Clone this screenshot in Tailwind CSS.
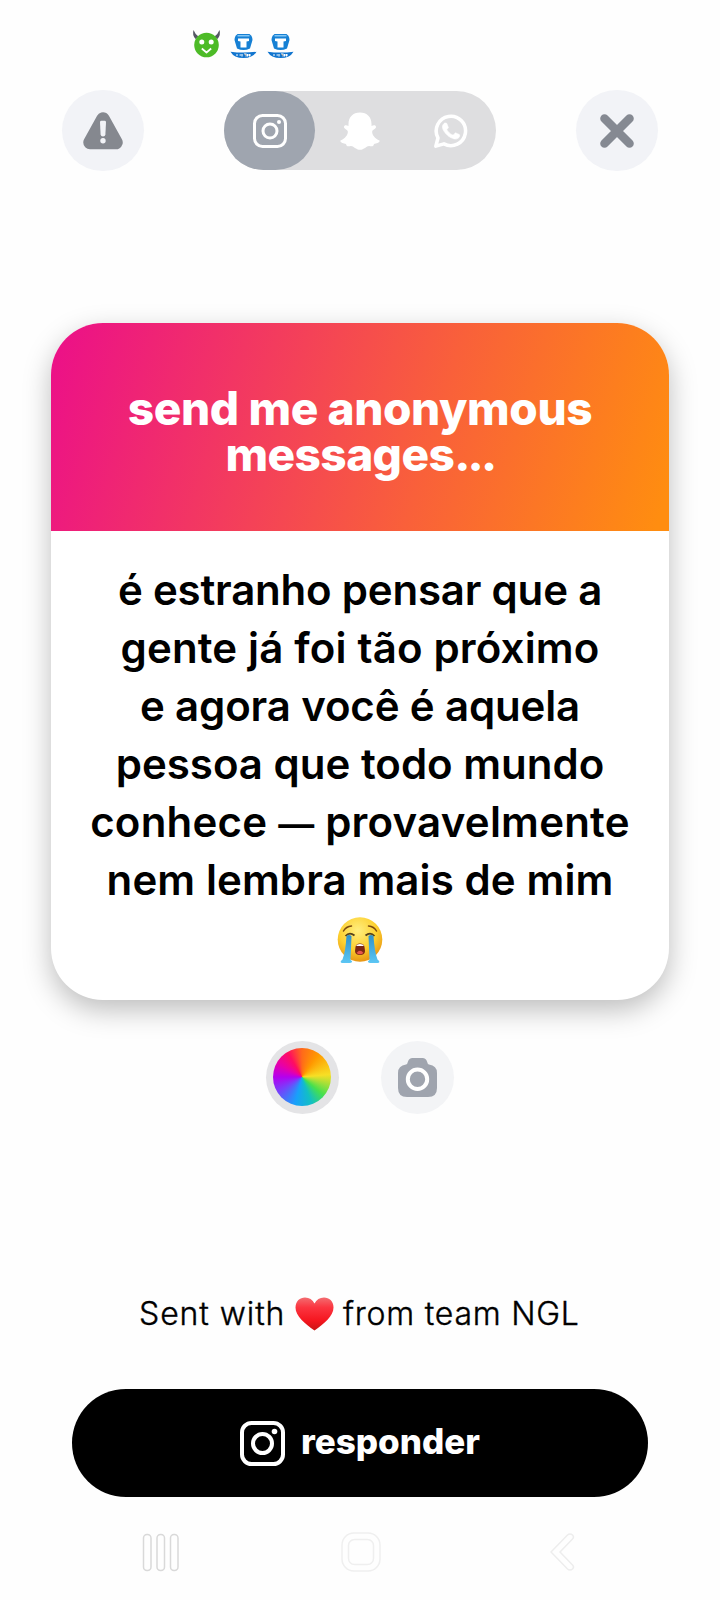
<!DOCTYPE html>
<html lang="pt"><head><meta charset="utf-8"><title>NGL</title>
<script src="https://cdn.jsdelivr.net/npm/@tailwindcss/browser@4"></script></head>
<body class="bg-[#fefefe]">
<main class="w-[720px] h-[1600px] overflow-hidden flex flex-col items-center font-['Inter','Liberation_Sans',sans-serif] text-black">
  <div class="w-full h-[90px] pt-[29px] pl-[192px] flex gap-[8px] shrink-0">
    <svg class="w-[29px] h-[30px]" viewBox="0 0 29 30"><path d="M1.500 1Q0 6 3.500 10L6.500 7.500Q3 5 1.500 1ZM27.500 1Q29 6 25.500 10L22.500 7.500Q26 5 27.500 1Z" fill="#555764"/><circle cx="14.500" cy="16" r="12.300" fill="#4dbb27"/><circle cx="9.800" cy="13" r="2.500" fill="#fff"/><circle cx="19.200" cy="13" r="2.500" fill="#fff"/><path d="M9.800 19.500L14.500 23.500L19.200 19.500" fill="none" stroke="#fff" stroke-width="1.700" stroke-linejoin="round"/></svg>
    <svg class="w-[29px] h-[30px]" viewBox="0 0 29 30"><defs><g id="app"><path d="M8.500 5H20.500Q23.500 7 23.500 11L21 19.500Q14.500 22.500 8 19.500L5.500 11Q5.500 7 8.500 5Z" fill="#1680d4"/><path d="M8.500 6H20.500V7.500H8.500Z" fill="#82c6f5"/><path d="M9 9.500H20V12L17.500 12.500V18.500H11.500V12.500L9 12Z" fill="#fff"/><path d="M1.500 22.700Q14.500 24.500 27.500 22.700Q24 29 14.500 29Q5 29 1.500 22.700Z" fill="#1175cf"/><path d="M7 26H9M10.500 26H12M13 25V27.500M15 25H17V27.500M18.500 25V27.500M20.500 25V27.500M19 26H22" stroke="#fff" stroke-width="1.100"/></g></defs><use href="#app"/></svg>
    <svg class="w-[29px] h-[30px]" viewBox="0 0 29 30"><use href="#app"/></svg>
  </div>
  <header class="w-full pl-[62px] h-[81px] shrink-0 flex items-center">
    <button class="w-[82px] h-[81px] rounded-full bg-[#f2f3f7] flex items-center justify-center"><svg class="w-[40px] h-[38px]" viewBox="0 0 40 38"><path d="M20 7L33 30.500H7Z" fill="#85888f" stroke="#85888f" stroke-width="13.500" stroke-linejoin="round"/><path d="M17 10.200Q17 8.800 18.400 8.800H21.600Q23 8.800 23 10.200L22.400 22.500Q22.200 24.500 20 24.500T17.600 22.500Z" fill="#f2f3f7"/><circle cx="20" cy="28.800" r="2.700" fill="#f2f3f7"/></svg></button>
    <div class="ml-[80px] w-[272px] h-[79px] rounded-full bg-[#dedee0] flex">
      <div class="w-[91px] h-[79px] rounded-full bg-[#9fa5af] flex items-center justify-center"><svg class="size-[34px]" viewBox="0 0 34 34" fill="none" stroke="#fff"><rect x="1.500" y="1.500" width="31" height="31" rx="8" stroke-width="3"/><circle cx="17" cy="17" r="7" stroke-width="3"/><circle cx="26" cy="8" r="2" fill="#fff" stroke="none"/></svg></div>
      <div class="w-[90px] h-[79px] flex items-center justify-center"><svg class="w-[40px] h-[38px]" viewBox="0 0 40 38"><path d="M20 .5C27 .5 31.500 5 31.500 12V14C34 12.800 36 13.200 36 15C36 17 32.500 17.500 32.200 19.500C31.800 22.500 34.500 26.500 39.500 28.500C40.500 30.500 36.500 31.500 34 32C33.500 34.500 32.500 34.500 29 34C26.500 34 24 37.800 20 37.800S13.500 34 11 34C7.500 34.500 6.500 34.500 6 32C3.500 31.500-.5 30.500.5 28.500C5.500 26.500 8.200 22.500 7.800 19.500C7.500 17.500 4 17 4 15C4 13.200 6 12.800 8.500 14V12C8.500 5 13 .5 20 .5Z" fill="#fff"/></svg></div>
      <div class="w-[91px] h-[79px] flex items-center justify-center"><svg class="size-[34px]" viewBox="0 0 24 24"><path fill="#fff" stroke="#fff" stroke-width=".5" d="M17.472 14.382c-.297-.149-1.758-.867-2.030-.967-.273-.099-.471-.148-.670.150-.197.297-.767.966-.940 1.164-.173.199-.347.223-.644.075-.297-.150-1.255-.463-2.390-1.475-.883-.788-1.480-1.761-1.653-2.059-.173-.297-.018-.458.130-.606.134-.133.298-.347.446-.520.149-.174.198-.298.298-.497.099-.198.050-.371-.025-.520-.075-.149-.669-1.612-.916-2.207-.242-.579-.487-.5-.669-.510-.173-.008-.371-.010-.570-.010-.198 0-.520.074-.792.372-.272.297-1.040 1.016-1.040 2.479 0 1.462 1.065 2.875 1.213 3.074.149.198 2.096 3.200 5.077 4.487.709.306 1.262.489 1.694.625.712.227 1.360.195 1.871.118.571-.085 1.758-.719 2.006-1.413.248-.694.248-1.289.173-1.413-.074-.124-.272-.198-.570-.347"/><path d="M1.300 22.700L2.800 16.900A10.350 10.350 0 1 1 7 21.100Z" fill="none" stroke="#fff" stroke-width="2.500" stroke-linejoin="round"/></svg></div>
    </div>
    <button class="ml-[80px] w-[82px] h-[81px] rounded-full bg-[#f2f3f7] flex items-center justify-center"><svg class="size-[34px]" viewBox="0 0 34 34"><path d="M4.500 4.500L29.500 29.500M29.500 4.500L4.500 29.500" stroke="#858992" stroke-width="8.600" stroke-linecap="round"/></svg></button>
  </header>
  <section class="mt-[152px] w-[618px] h-[677px] shrink-0 rounded-[52px] bg-white overflow-hidden flex flex-col shadow-[0_10px_28px_rgba(0,0,0,0.26)]">
    <h1 class="h-[208px] pt-[62px] shrink-0 bg-[linear-gradient(107deg,#ec1187_2%,#f9603a_61%,#ff8d10_98%)] text-white text-[46px] leading-[46px] font-extrabold tracking-[-0.4px] flex flex-col items-center whitespace-nowrap">
      <span>send me anonymous</span><span class="tracking-[-0.6px]">messages<span class="tracking-[-2.800px]">...</span></span></h1>
    <div class="pt-[30px] text-[42px] leading-[58px] font-semibold flex flex-col items-center whitespace-nowrap">
      <span class="tracking-[-0.2px]">é estranho pensar que a</span><span class="tracking-[0.17px]">gente já foi tão próximo</span><span class="tracking-[-0.14px]">e agora você é aquela</span><span>pessoa que todo mundo</span><span class="tracking-[0.22px]">conhece <span class="text-[36px] leading-none font-semibold">—</span> provavelmente</span><span class="tracking-[0.1px]">nem lembra mais de mim</span>
      <svg role="img" aria-label="😭" class="mt-[7px] w-[48px] h-[48px]" viewBox="0 0 48 48"><defs><radialGradient id="f" cx=".45" cy=".3" r=".7"><stop offset="0" stop-color="#ffee80"/><stop offset=".6" stop-color="#fdd02f"/><stop offset="1" stop-color="#e89613"/></radialGradient><linearGradient id="t" x2="0" y2="1"><stop stop-color="#2f91c9"/><stop offset="1" stop-color="#5cc6f4"/></linearGradient></defs><circle cx="24" cy="23.500" r="22.300" fill="url(#f)"/><path d="M7.500 15Q10 10.500 15.500 10M40.500 15Q38 10.500 32.500 10" fill="none" stroke="#7c4a10" stroke-width="1.500" stroke-linecap="round"/><path d="M9.500 20Q13.500 15.500 18.500 19.500M38.500 20Q34.500 15.500 29.500 19.500" fill="none" stroke="#56411b" stroke-width="1.800"/><path d="M10.500 20Q13 18 15.500 20L14.500 44Q18 46 14 47H6Q3 46 6.500 43.500Q9.500 36 10.500 20ZM37.500 20Q35 18 32.500 20L33.500 44Q30 46 34 47H42Q45 46 41.500 43.500Q38.500 36 37.500 20Z" fill="url(#t)"/><path d="M19.500 31Q20 27.500 24 27.500T28.500 31L29 35Q29 39 24 39T19 35Z" fill="#7e2914"/><path d="M20 30Q21 28 24 28T28 30Z" fill="#fff"/><path d="M20.500 37Q24 32.500 27.500 37Q24 39.500 20.500 37Z" fill="#e8574c"/></svg>
    </div>
  </section>
  <div class="mt-[41px] flex gap-[42px] shrink-0">
    <button class="size-[73px] rounded-full bg-[#e4e4e6] flex items-center justify-center"><span class="size-[58px] rounded-full bg-[conic-gradient(#ff6a1a,#ff9800_35deg,#f7df25_85deg,#46e04e_130deg,#12bfc4_160deg,#18a0fb_195deg,#7a3dfb_240deg,#b400ee_270deg,#e800a8_300deg,#ff0d60_330deg,#ff6a1a)] mr-px mb-px"></span></button>
    <button class="size-[73px] rounded-full bg-[#f3f4f6] flex items-center justify-center"><svg class="size-[39px]" viewBox="0 0 39 39"><path d="M8 6.500Q9.500 6 10 3.500Q11 0 14.500 0H24.500Q28 0 29 3.500Q29.500 6 31 6.500Q39 7.500 39 15V30Q39 39 30 39H9Q0 39 0 30V15Q0 7.500 8 6.500Z" fill="#9fa4ae"/><circle cx="19.500" cy="21.300" r="9.700" fill="none" stroke="#fff" stroke-width="4"/></svg></button>
  </div>
  <p class="mt-[176px] h-[48px] w-full pl-[139px] shrink-0 flex items-center text-[32px] leading-[48px] font-light [-webkit-text-stroke:0.4px_black] whitespace-nowrap"><span class="w-[156px] tracking-[0.92px]">Sent with</span><svg role="img" aria-label="❤️" class="w-[39px] h-[34px] mr-[9px]" viewBox="0 0 39 34"><defs><linearGradient id="h" x2="0" y2="1"><stop stop-color="#f36c70"/><stop offset=".3" stop-color="#fb3540"/><stop offset=".7" stop-color="#f5161f"/><stop offset="1" stop-color="#c91414"/></linearGradient></defs><path d="M19.500 33.500C10 27 .5 19 .5 10.500C.5 4 5 .5 10 .5Q16.500.5 19.500 6.500Q22.500.5 29 .5C34 .5 38.500 4 38.500 10.500C38.500 19 29 27 19.500 33.500Z" fill="url(#h)"/></svg><span class="tracking-[0.77px]">from team NGL</span></p>
  <button class="mt-[51px] w-[576px] h-[108px] shrink-0 rounded-full bg-black text-white flex items-center justify-center gap-[16px] text-[35px] font-extrabold"><svg class="size-[45px] mt-px" viewBox="0 0 45 45" fill="none" stroke="#fff"><rect x="2" y="2" width="41" height="41" rx="9.500" stroke-width="4"/><circle cx="22.500" cy="22.500" r="9.500" stroke-width="4"/><circle cx="34.500" cy="10.500" r="2.800" fill="#fff" stroke="none"/></svg><span class="pb-[4px]">responder</span></button>
  <nav class="mt-[35px] w-full pl-[142px] h-[40px] shrink-0 flex items-center">
    <svg class="w-[38px] h-[40px]" viewBox="0 0 38 40" fill="none" stroke="#d9d9d9" stroke-width="1.500"><rect x="1.500" y="2.500" width="7.500" height="36" rx="3.500"/><rect x="15" y="2.500" width="7.500" height="36" rx="3.500"/><rect x="28.500" y="2.500" width="7.500" height="36" rx="3.500"/></svg>
    <svg class="ml-[161px] size-[40px]" viewBox="0 0 40 40" fill="none" stroke="#efefef" stroke-width="1.500"><rect x="1" y="1" width="38" height="38" rx="12"/><rect x="7.500" y="7.500" width="25" height="25" rx="6"/></svg>
    <svg class="ml-[169px] w-[25px] h-[40px]" viewBox="0 0 25 40" fill="none" stroke="#ededed" stroke-width="1.500"><path d="M1 20L17.500 3Q20 1 22.500 3Q24.500 5 22.500 7L10 20L22.500 33Q24.500 35 22.500 37Q20 39 17.500 37Z"/></svg>
  </nav>
</main>
</body></html>
